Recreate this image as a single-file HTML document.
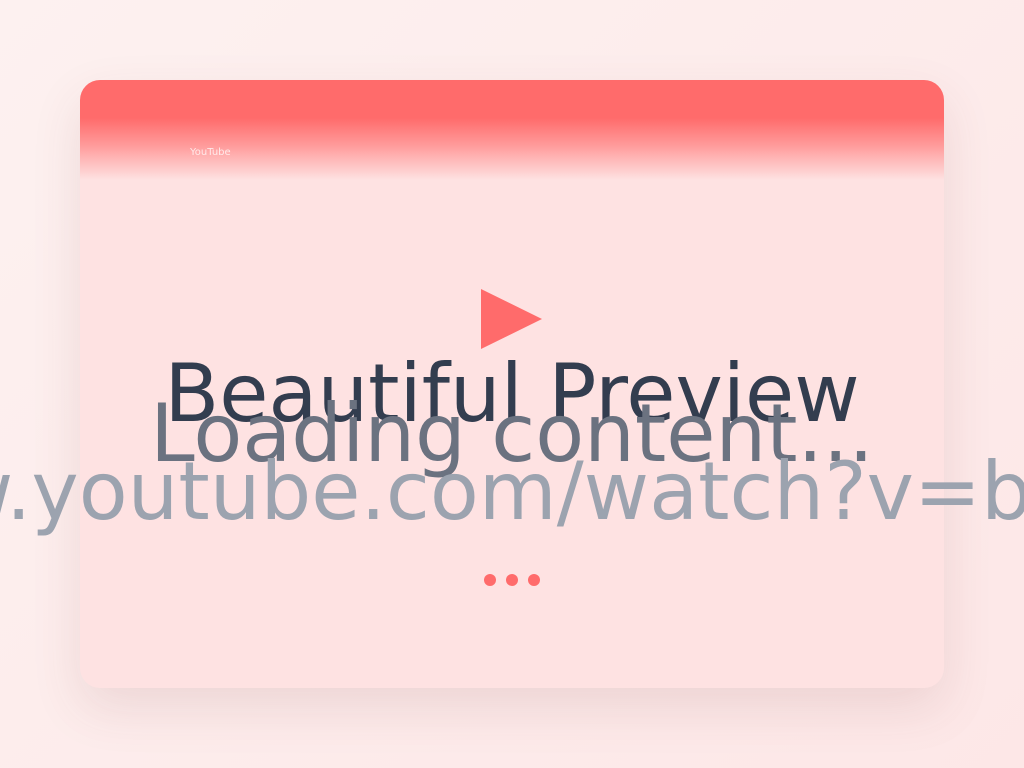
<!DOCTYPE html>
<html><head><meta charset="utf-8"><style>
html,body{margin:0;padding:0;width:1024px;height:768px;overflow:hidden;}
body{background:linear-gradient(135deg,#fdf1f0 0%,#fde7e7 100%);position:relative;font-family:"DejaVu Sans","Liberation Sans",sans-serif;}
.card{position:absolute;left:80px;top:80px;width:864px;height:608px;border-radius:20px;background:#fee2e2;box-shadow:0 20px 50px rgba(120,60,60,0.12);overflow:hidden;}
.hdr{position:absolute;left:0;top:0;width:100%;height:100px;background:linear-gradient(180deg,#ff6b6b 0%,#ff6b6b 38%,#ff9a9a 65%,#fee2e2 100%);}
.yt{position:absolute;left:110px;top:67px;font-size:10px;color:rgba(255,255,255,0.75);}
.t{position:absolute;left:0;width:1024px;text-align:center;font-size:80px;white-space:nowrap;line-height:1;}
.clip{position:absolute;left:0;top:0;width:1024px;height:768px;overflow:hidden;}
</style></head><body>
<div class="card"><div class="hdr"></div><div class="yt">YouTube</div></div>
<svg style="position:absolute;left:481px;top:289px" width="61" height="61"><polygon points="0,0 61,30 0,60" fill="#ff6b6b"/></svg>
<div class="clip">
<div class="t" style="top:354px;color:#333d4f">Beautiful Preview</div>
<div class="t" style="top:394px;color:#6b7280">Loading content...</div>
<div style="position:absolute;left:-183px;top:452px;font-size:80px;line-height:1;white-space:nowrap;color:#9ca3af">www.youtube.com/watch?v=bX</div>
</div>
<div style="position:absolute;left:484px;top:574px;width:12px;height:12px;border-radius:50%;background:#ff6b6b"></div>
<div style="position:absolute;left:506px;top:574px;width:12px;height:12px;border-radius:50%;background:#ff6b6b"></div>
<div style="position:absolute;left:528px;top:574px;width:12px;height:12px;border-radius:50%;background:#ff6b6b"></div>
</body></html>
